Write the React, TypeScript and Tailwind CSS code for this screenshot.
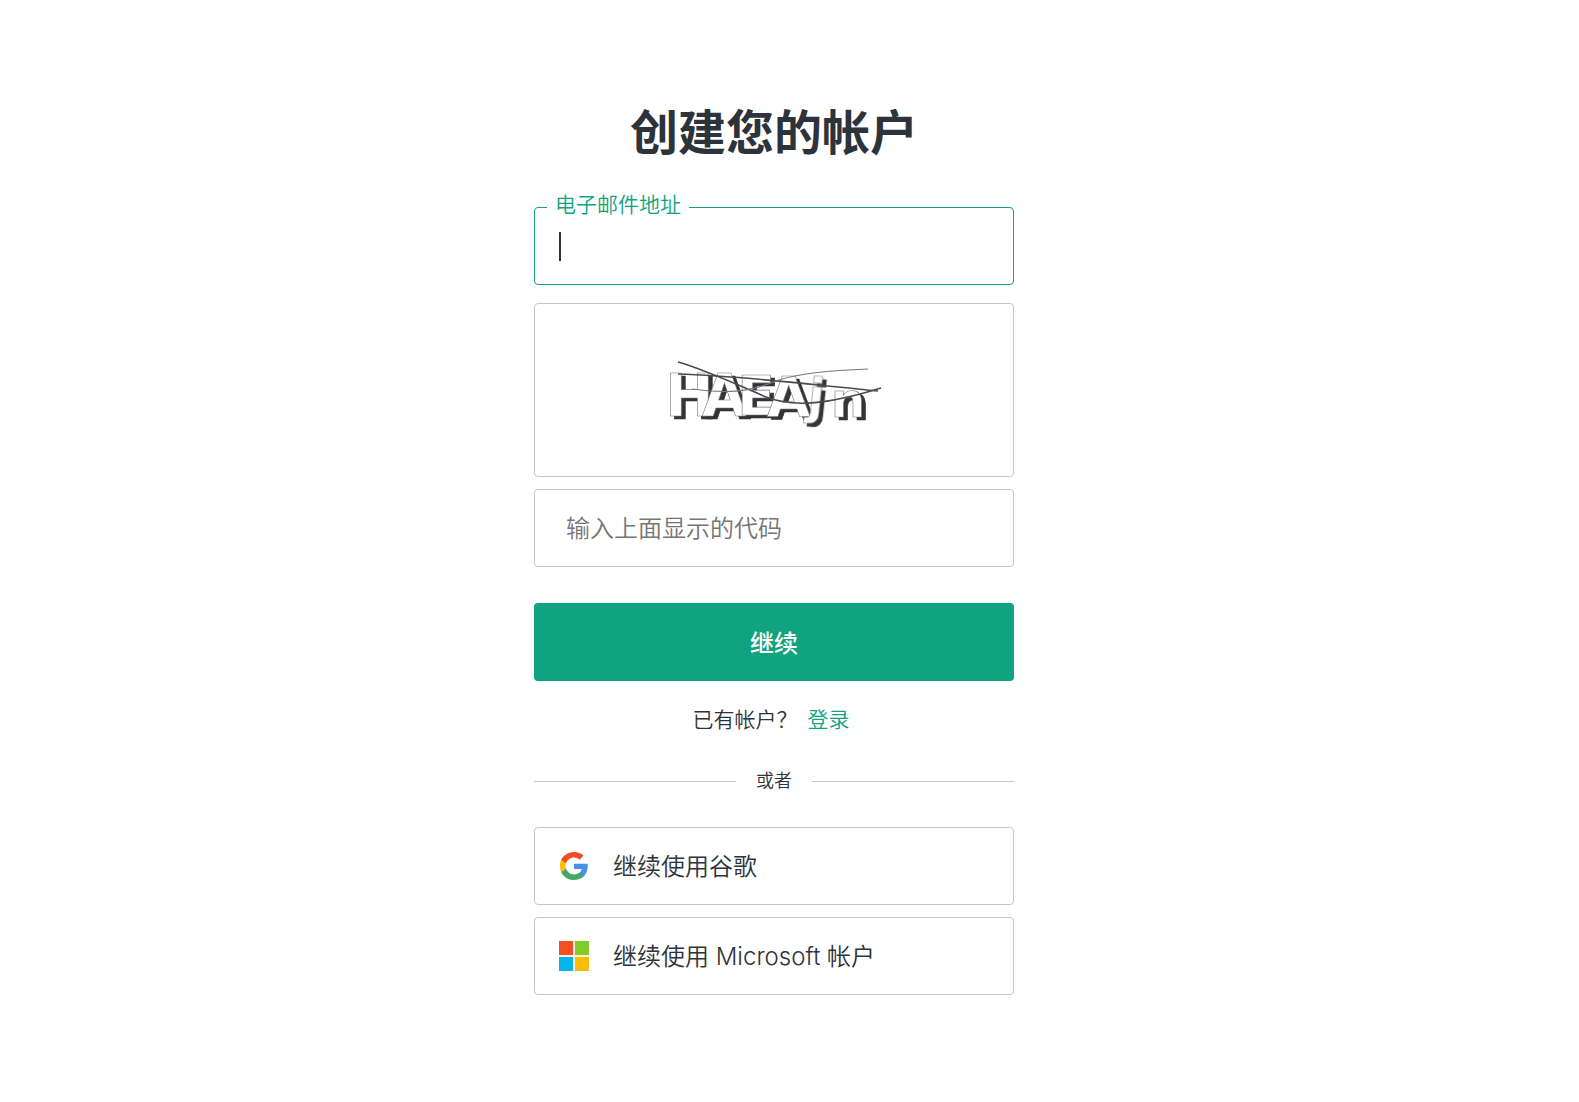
import { useState } from "react";

const letters = [
    { char: "H", x: 11, y: 76, size: 58, rotate: 0 },
    { char: "A", x: 48, y: 76, size: 58, rotate: 0 },
    { char: "E", x: 83, y: 75, size: 56, rotate: 0 },
    { char: "A", x: 113, y: 76, size: 56, rotate: 0 },
    { char: "j", x: 152, y: 73, size: 50, rotate: 6 },
    { char: "n", x: 177, y: 77, size: 48, rotate: 0 },
];

const Captcha = () => (
    <svg viewBox="0 0 240 100" className="h-[100px] w-[240px]" role="img" aria-label="验证码">
        <g fontFamily="'DejaVu Sans', sans-serif" fontWeight="700" fill="#fff" stroke="#77777c" strokeWidth="0.6">
            {letters.map((l, i) => (
                <text
                    key={i}
                    x={l.x}
                    y={l.y}
                    fontSize={l.size}
                    transform={`rotate(${l.rotate} ${l.x} ${l.y})`}
                    className="drop-shadow-[4px_3px_0_#333338]"
                >
                    {l.char}
                </text>
            ))}
        </g>
        <g fill="none" stroke="#4a4a50" strokeWidth="1.6">
            <path d="M24 22 C52 30 84 45 112 57 C140 68 175 64 227 48" />
            <path d="M24 34 C90 36 150 44 224 51" />
            <path d="M38 49 C75 54 95 52 125 40 C150 32 185 30 214 29" stroke="#77777c" strokeWidth="1.2" />
        </g>
    </svg>
);

const GoogleIcon = () => (
    <svg viewBox="0 0 48 48" className="size-7" aria-hidden="true">
        <path fill="#4a90e8" d="M47.5 24.6c0-1.6-.2-3.2-.4-4.6H24v9.1h13.2c-.6 3-2.3 5.6-4.9 7.3v6h7.9c4.6-4.3 7.3-10.5 7.3-17.8z" />
        <path fill="#43a866" d="M24 48c6.6 0 12.2-2.2 16.2-5.9l-7.9-6c-2.2 1.5-5 2.3-8.3 2.3-6.4 0-11.8-4.3-13.7-10.1H2.1v6.2C6.1 42.6 14.4 48 24 48z" />
        <path fill="#fcbd0c" d="M10.3 28.3c-.5-1.5-.8-3-.8-4.6s.3-3.2.8-4.6v-6.2H2.1C.5 16.1-.1 19.8-.1 23.7s.8 7.5 2.2 10.8z" />
        <path fill="#f04b23" d="M24 9.5c3.6 0 6.8 1.2 9.4 3.7l7-7C36.2 2.3 30.6 0 24 0 14.6 0 6.1 5.4 2.1 13.2l8.2 6.2C12.2 13.7 17.6 9.5 24 9.5z" />
    </svg>
);

const MicrosoftIcon = () => (
    <svg viewBox="0 0 30 30" className="size-[30px]" aria-hidden="true">
        <path fill="#f7f0da" d="M0 0h30v30H0z" />
        <path fill="#f25022" d="M0 0h14v14H0z" />
        <path fill="#80cc28" d="M16 0h14v14H16z" />
        <path fill="#05b4ec" d="M0 16h14v14H0z" />
        <path fill="#fbbc09" d="M16 16h14v14H16z" />
    </svg>
);

const App = () => {
    const [email, setEmail] = useState("");

    return (
        <main className="flex justify-center bg-white pt-[97px] pr-[31px] pb-[100px] font-['Inter','Noto_Sans_CJK_SC',sans-serif] font-[350] text-[#2d333a]">
            <div className="w-full max-w-[480px]">
                <h1 className="text-center text-[48px] leading-[72px] font-bold">创建您的帐户</h1>

                <form className="mt-[38px]" onSubmit={(e) => e.preventDefault()}>
                    <div className="relative">
                        <input
                            type="email"
                            id="email"
                            value={email}
                            onChange={(e) => setEmail(e.target.value)}
                            className="block h-[78px] w-full rounded border border-[#10a37f] px-6 text-[24px] caret-transparent outline-none"
                        />
                        <label htmlFor="email" className="absolute -top-4 left-[13px] bg-white px-2 text-[21px] leading-[28px] text-[#10a37f]">
                            电子邮件地址
                        </label>
                        {email === "" && <span className="absolute top-[25px] left-[25px] h-[29px] w-0.5 bg-[#2d333a]" />}
                    </div>

                    <div className="mt-[18px] flex h-[174px] items-center justify-center rounded border border-[#c2c8d0]">
                        <Captcha />
                    </div>
                    <input
                        type="text"
                        name="code"
                        aria-label="输入上面显示的代码"
                        placeholder="输入上面显示的代码"
                        className="mt-3 block h-[78px] w-full rounded border border-[#c2c8d0] px-[31px] text-[24px] outline-none placeholder:text-[#757575]"
                    />

                    <button type="submit" className="mt-9 block h-[78px] w-full rounded bg-[#10a37f] pt-[3px] text-[24px] font-medium text-white">
                        继续
                    </button>
                </form>

                <p className="mt-[25px] flex justify-center gap-2.5 pr-1.5 text-[21px] leading-[28px]">
                    <span>已有帐户？</span>
                    <a href="#" className="text-[#10a37f]">登录</a>
                </p>

                <div className="mt-[33px] flex items-center gap-5 text-[18px] leading-[28px]">
                    <span className="h-px flex-1 bg-[#c2c8d0]" />
                    或者
                    <span className="h-px flex-1 bg-[#c2c8d0]" />
                </div>

                <div className="mt-8 flex flex-col gap-3 text-[24px]">
                    <button type="button" className="flex h-[78px] items-center gap-6 rounded border border-[#c2c8d0] px-6">
                        <span className="flex w-[30px] justify-center"><GoogleIcon /></span>
                        <span className="pt-0.5">继续使用谷歌</span>
                    </button>
                    <button type="button" className="flex h-[78px] items-center gap-6 rounded border border-[#c2c8d0] px-6">
                        <MicrosoftIcon />
                        <span className="pt-0.5">继续使用 Microsoft 帐户</span>
                    </button>
                </div>
            </div>
        </main>
    );
};

export default App;
